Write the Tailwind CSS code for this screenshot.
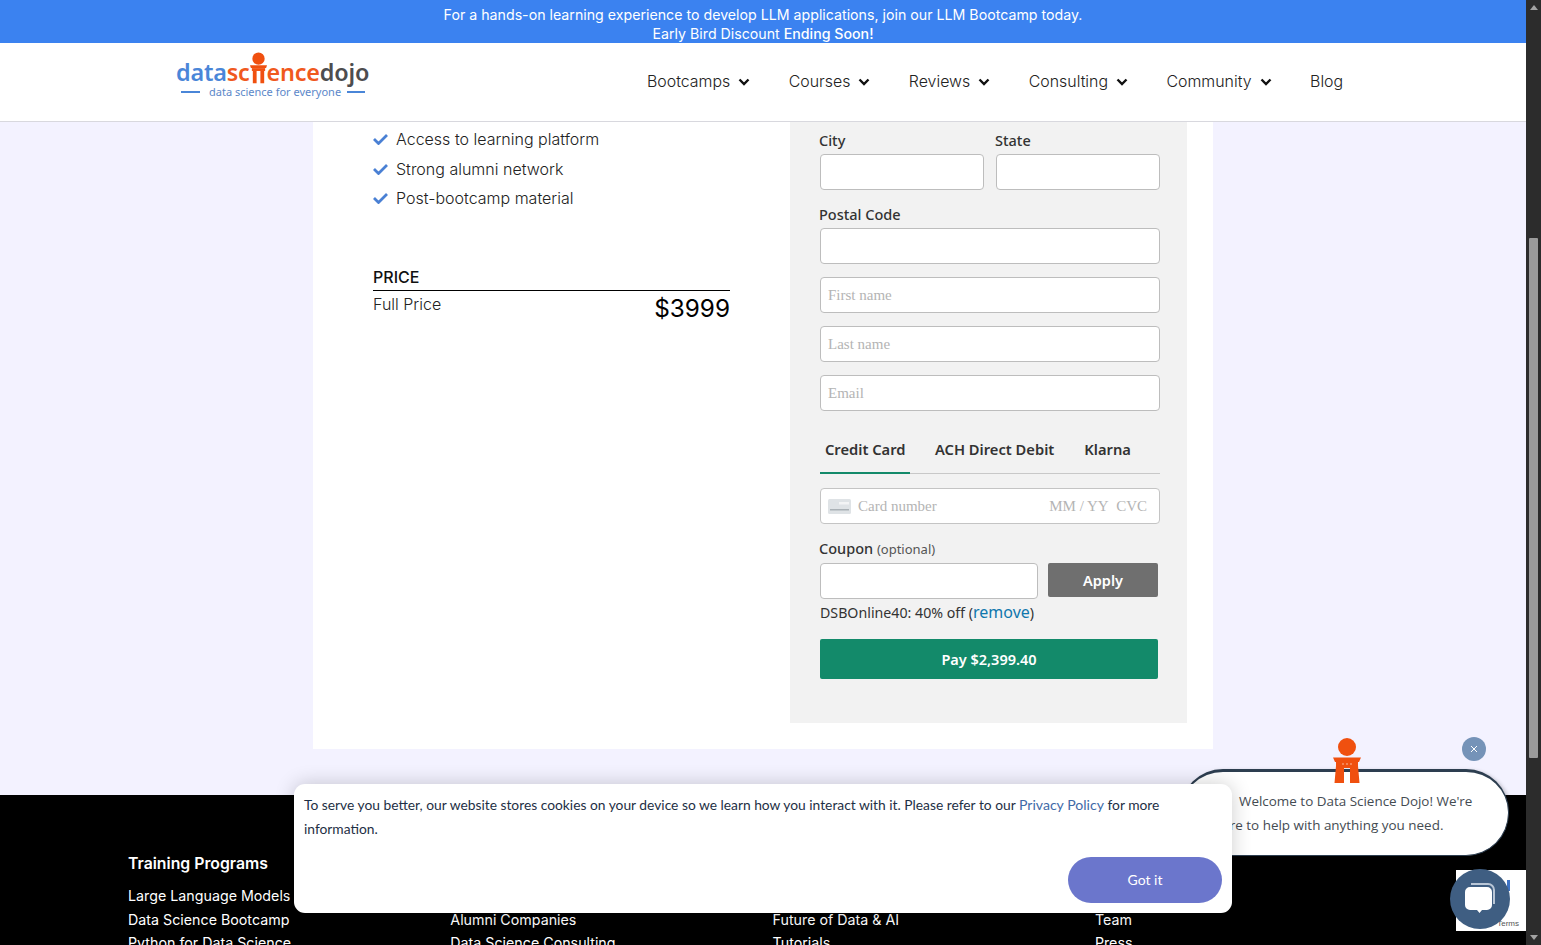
<!DOCTYPE html>
<html lang="en">
<head>
  <meta charset="UTF-8" />
  <meta name="viewport" content="width=device-width, initial-scale=1.0"/>
  <title>Data Science Dojo - Checkout</title>
  <script src="https://cdn.jsdelivr.net/npm/@tailwindcss/browser@4"></script>
</head>
<body class="font-['Inter',sans-serif] overflow-hidden">
<div class="relative flex h-[945px] w-[1541px] overflow-hidden">

  <!-- page -->
  <div class="w-[1526px] h-[945px] overflow-hidden bg-[#f3f2ff]">
    <div class="h-[43px] bg-[#3b82f0] text-white text-center text-[14.2px] leading-[19px] pt-[5px]">
      <p>For a hands-on learning experience to develop LLM applications, join our LLM Bootcamp today.</p>
      <p>Early Bird Discount <span class="font-medium">Ending Soon!</span></p>
    </div>

    <header class="h-[79px] bg-white border-b border-[#d8d8de] flex items-start">
      <a class="ml-[176px] mt-[9px] w-[194px] block">
        <div class="flex items-end h-[35px] font-['Noto_Sans',sans-serif] font-semibold text-[23.4px] leading-[29px] tracking-[-0.2px]">
          <span class="text-[#4a86d8]">data</span><span class="text-[#f0591e]">sc</span>
          <svg class="w-[21px] h-[36px] -mx-[2px] -mb-[1px] shrink-0" viewBox="0 0 22 38" fill="#f0500f">
            <circle cx="11" cy="7" r="6.500"/>
            <path d="M2 14 L20 14 L19 17 L3 17Z"/>
            <rect x="4" y="17" width="14" height="3"/>
            <rect x="5" y="20" width="4" height="13"/>
            <rect x="13" y="20" width="4" height="13"/>
          </svg>
          <span class="text-[#f0591e]">ence</span><span class="text-[#4d4d4f]">dojo</span>
        </div>
        <div class="flex items-center -mt-[2px] ml-[5px] text-[11px] leading-[14px] text-[#5c88c9] font-['Noto_Sans',sans-serif]">
          <span class="w-[19px] h-[2px] bg-[#4a86d8]"></span>
          <span class="ml-[9px] mr-[6px]">data science for everyone</span>
          <span class="w-[18px] h-[2px] bg-[#4a86d8]"></span>
        </div>
      </a>
      <nav class="ml-[277px] mt-[29px] flex items-center gap-[38.5px] text-[15.9px] leading-[20px] font-light text-[#222]">
        <a class="flex items-center gap-[8px]">Bootcamps
          <svg class="w-[12px] h-[12px]" viewBox="0 0 12 12" fill="none" stroke="#111" stroke-width="2.4"><path d="M1.500 3.500 6 8l4.500-4.500"/></svg></a>
        <a class="flex items-center gap-[8px]">Courses
          <svg class="w-[12px] h-[12px]" viewBox="0 0 12 12" fill="none" stroke="#111" stroke-width="2.4"><path d="M1.500 3.500 6 8l4.500-4.500"/></svg></a>
        <a class="flex items-center gap-[8px]">Reviews
          <svg class="w-[12px] h-[12px]" viewBox="0 0 12 12" fill="none" stroke="#111" stroke-width="2.4"><path d="M1.500 3.500 6 8l4.500-4.500"/></svg></a>
        <a class="flex items-center gap-[8px]">Consulting
          <svg class="w-[12px] h-[12px]" viewBox="0 0 12 12" fill="none" stroke="#111" stroke-width="2.4"><path d="M1.500 3.500 6 8l4.500-4.500"/></svg></a>
        <a class="flex items-center gap-[8px]">Community
          <svg class="w-[12px] h-[12px]" viewBox="0 0 12 12" fill="none" stroke="#111" stroke-width="2.4"><path d="M1.500 3.500 6 8l4.500-4.500"/></svg></a>
        <a>Blog</a>
      </nav>
    </header>

    <!-- checkout card -->
    <main class="h-[673px]">
      <div class="ml-[313px] w-[900px] h-[627px] bg-white flex">
        <div class="ml-[60px] w-[357px] pt-[5px] text-[#333]">
          <ul class="text-[16px] leading-[24px] font-light text-[#222] space-y-[5.5px] h-[140px]">
            <li class="flex items-center gap-[8px] h-[24px]">
              <svg class="w-[15px] h-[12px]" viewBox="0 0 15 12" fill="none" stroke="#4a80d4" stroke-width="2.8"><path d="M1 6l4.500 4.500L14 2"/></svg>
              Access to learning platform</li>
            <li class="flex items-center gap-[8px] h-[24px]">
              <svg class="w-[15px] h-[12px]" viewBox="0 0 15 12" fill="none" stroke="#4a80d4" stroke-width="2.8"><path d="M1 6l4.500 4.500L14 2"/></svg>
              Strong alumni network</li>
            <li class="flex items-center gap-[8px] h-[24px]">
              <svg class="w-[15px] h-[12px]" viewBox="0 0 15 12" fill="none" stroke="#4a80d4" stroke-width="2.8"><path d="M1 6l4.500 4.500L14 2"/></svg>
              Post-bootcamp material</li>
          </ul>
          <div class="border-b border-black text-[16px] leading-[20px] font-medium text-[#111] h-[24px]">PRICE</div>
          <div class="flex justify-between items-start">
            <span class="text-[16px] leading-[26px] font-light text-[#222]">Full Price</span>
            <span class="text-[24.3px] leading-[32px] mt-[1px] text-black">$3999</span>
          </div>
        </div>

        <div class="ml-[60px] w-[397px] h-[601px] bg-[#f2f2f2] pl-[30px] font-['Noto_Sans',sans-serif] text-[#333]">
          <div class="flex w-[340px] pt-[8px]">
            <div class="w-[176px]">
              <label class="block -ml-px text-[14.5px] leading-[20px] font-medium">City</label>
              <div class="mt-[4px] w-[164px] h-[36px] bg-white border border-[#bdbdbd] rounded-[4px]"></div>
            </div>
            <div class="w-[164px]">
              <label class="block -ml-px text-[14.5px] leading-[20px] font-medium">State</label>
              <div class="mt-[4px] w-[164px] h-[36px] bg-white border border-[#bdbdbd] rounded-[4px]"></div>
            </div>
          </div>
          <label class="block -ml-px mt-[14px] text-[14.5px] leading-[20px] font-medium">Postal Code</label>
          <div class="mt-[4px] w-[340px] h-[36px] bg-white border border-[#bdbdbd] rounded-[4px]"></div>
          <div class="mt-[13px] w-[340px] h-[36px] bg-white border border-[#bdbdbd] rounded-[4px] pl-[7px] flex items-center font-['Liberation_Serif',serif] text-[15px] text-[#b4b4b4]">First name</div>
          <div class="mt-[13px] w-[340px] h-[36px] bg-white border border-[#bdbdbd] rounded-[4px] pl-[7px] flex items-center font-['Liberation_Serif',serif] text-[15px] text-[#b4b4b4]">Last name</div>
          <div class="mt-[13px] w-[340px] h-[36px] bg-white border border-[#bdbdbd] rounded-[4px] pl-[7px] flex items-center font-['Liberation_Serif',serif] text-[15px] text-[#b4b4b4]">Email</div>

          <div class="mt-[16px] w-[340px] h-[47px] flex border-b border-[#c8c8c8] text-[14.7px] font-semibold text-[#333]">
            <div class="w-[90px] h-[47px] pl-[5px] pt-[11px] leading-[22px] border-b-2 border-[#138a6a]">Credit Card</div>
            <div class="ml-[25px] pt-[11px] leading-[22px]">ACH Direct Debit</div>
            <div class="ml-[30px] pt-[11px] leading-[22px]">Klarna</div>
          </div>

          <div class="mt-[14px] w-[340px] h-[36px] bg-white border border-[#c4c4c4] rounded-[4px] flex items-center pl-[7px] pr-[12px] pt-[1px] font-['Liberation_Serif',serif] text-[15px] text-[#b4b4b4]">
            <svg class="w-[23px] h-[15px] shrink-0" viewBox="0 0 23 15">
              <rect width="23" height="15" rx="1.500" fill="#dfe3e6"/>
              <rect x="11" y="3" width="10" height="2.500" fill="#f3f4f5"/>
              <rect x="2" y="10" width="19" height="1.500" fill="#aab1b6"/>
            </svg>
            <span class="ml-[7px]">Card number</span>
            <span class="ml-auto">MM / YY&nbsp; CVC</span>
          </div>

          <div class="-ml-px mt-[14px] text-[14.5px] leading-[20px]"><span class="font-medium">Coupon</span> <span class="text-[13px] text-[#555]">(optional)</span></div>
          <div class="flex mt-[4px]">
            <div class="w-[218px] h-[36px] bg-white border border-[#bdbdbd] rounded-[4px]"></div>
            <div class="ml-[10px] w-[110px] h-[34px] pt-[1px] bg-[#6f6f6f] rounded-[2px] text-white text-[14.5px] font-semibold flex items-center justify-center">Apply</div>
          </div>
          <p class="mt-[2px] text-[14.2px] leading-[22px]">DSBOnline40: 40% off (<a class="text-[#0f77ad] text-[16px]">remove</a>)</p>
          <div class="mt-[15px] w-[338px] h-[40px] pt-[1px] bg-[#138a6a] rounded-[2px] text-white text-[14.5px] font-semibold flex items-center justify-center">Pay $2,399.40</div>
        </div>
      </div>
    </main>

    <footer class="h-[150px] bg-black text-white grid grid-cols-[322.3px_322.3px_322.3px_1fr] pl-[128px] pt-[57px] text-[14.25px] leading-[23.5px]">
      <div>
        <h3 class="text-[15.8px] leading-[24px] font-semibold mb-[8px]">Training Programs</h3>
        <p>Large Language Models</p>
        <p>Data Science Bootcamp</p>
        <p>Python for Data Science</p>
      </div>
      <div class="pt-[55.5px]">
        <p>Alumni Companies</p>
        <p>Data Science Consulting</p>
      </div>
      <div class="pt-[55.5px]">
        <p>Future of Data &amp; AI</p>
        <p>Tutorials</p>
      </div>
      <div class="pt-[55.5px]">
        <p>Team</p>
        <p>Press</p>
      </div>
    </footer>
  </div>

  <!-- scrollbar -->
  <div class="relative w-[15px] h-[945px] bg-[#2c2c2c]">
    <div class="absolute left-[4px] top-[5px] w-0 h-0 border-x-[4px] border-x-transparent border-b-[5px] border-b-[#a3a3a3]"></div>
    <div class="absolute left-[3px] top-[238px] w-[9px] h-[520px] rounded-[1px] bg-[#9b9b9b]"></div>
    <div class="absolute left-[4px] top-[935px] w-0 h-0 border-x-[4px] border-x-transparent border-t-[5px] border-t-[#a3a3a3]"></div>
  </div>

  <!-- recaptcha badge -->
  <div class="absolute left-[1456px] top-[870px] w-[70px] h-[61px] bg-white">
    <span class="absolute left-[51px] top-[10px] w-[3px] h-[11px] bg-[#3f73c4]"></span>
    <span class="absolute right-[7px] bottom-[2px] text-[8px] leading-[10px] text-[#555] font-['Liberation_Sans',sans-serif]">Terms</span>
  </div>

  <!-- chat greeting -->
  <div class="absolute left-[1180px] top-[769px] w-[329px] h-[87px] bg-white rounded-[43px] border-t-[3px] border-x border-b border-[#2d3e50] shadow-[2px_2px_4px_rgba(0,0,0,0.3)] font-['Open_Sans',sans-serif] text-[13.45px] leading-[24px] text-[#444b52] pl-[33px] pt-[17px]">
    <p class="w-[270px] indent-[25px]">Welcome to Data Science Dojo! We're here to help with anything you need.</p>
  </div>
  <svg class="absolute left-[1332px] top-[738px] w-[30px] h-[46px]" viewBox="0 0 30 46" fill="#f0500f">
    <circle cx="15" cy="9" r="9"/>
    <path d="M1 19.500 L29 19.500 L27 24 L3 24Z"/>
    <rect x="4" y="24" width="22" height="6"/>
    <path d="M4 28h8v17H2.500zM18 28h8l1.500 17H18z"/>
    <circle cx="11" cy="26" r=".8" fill="#fbc9b0"/>
    <circle cx="15" cy="26" r=".8" fill="#fbc9b0"/>
    <circle cx="19" cy="26" r=".8" fill="#fbc9b0"/>
  </svg>
  <div class="absolute left-[1462px] top-[737px] w-[24px] h-[24px] rounded-full bg-[#7593b8] text-white flex items-center justify-center">
    <svg class="w-[8px] h-[8px]" viewBox="0 0 8 8" stroke="#fff" stroke-width="1"><path d="M1 1l6 6M7 1 1 7"/></svg>
  </div>

  <!-- chat launcher -->
  <div class="absolute left-[1450px] top-[869px] w-[60px] h-[60px] rounded-full bg-[#3f5e82] flex items-center justify-center">
    <svg class="w-[32px] h-[34px]" viewBox="0 0 32 34">
      <path d="M7 2h17a6 6 0 0 1 6 6v14" fill="none" stroke="#b9c6d6" stroke-width="2"/>
      <path d="M6 5h17a5 5 0 0 1 5 5v13a5 5 0 0 1-5 5h-5l-2.500 3-2.500-3H6a5 5 0 0 1-5-5V10a5 5 0 0 1 5-5z" fill="#fff"/>
    </svg>
  </div>

  <!-- cookie notice -->
  <div class="absolute left-[294px] top-[784px] w-[938px] h-[129px] bg-white rounded-[11px] shadow-[0_0_20px_rgba(0,0,0,0.2)] font-['Lato',sans-serif] text-[13.8px] leading-[24.5px] text-[#1e2f45] pl-[10px] pr-[60px] pt-[8.5px]">
    <p>To serve you better, our website stores cookies on your device so we learn how you interact with it. Please refer to our <a class="text-[#3f6aa8] text-[14.1px]">Privacy Policy</a> for more information.</p>
    <button class="absolute left-[774px] top-[73px] w-[154px] h-[46px] rounded-full bg-[#6b76cc] text-white text-[14px] leading-[24px]">Got it</button>
  </div>
</div>
</body>
</html>
